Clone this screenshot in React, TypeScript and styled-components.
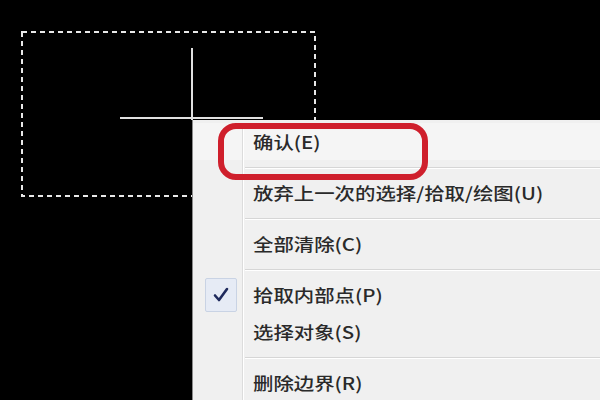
import React from "react";
import styled, { createGlobalStyle } from "styled-components";

const Global = createGlobalStyle`
  html, body {
    margin: 0;
    padding: 0;
    background: #000;
  }
  #root {
    width: 600px;
    height: 400px;
  }
`;

const Screen = styled.div`
  position: relative;
  width: 600px;
  height: 400px;
  background: #000;
  overflow: hidden;
`;

const Drawing = styled.svg`
  position: absolute;
  left: 0;
  top: 0;
  width: 600px;
  height: 400px;
`;

const Menu = styled.div`
  position: absolute;
  left: 192px;
  top: 120px;
  width: 420px;
  height: 290px;
  box-sizing: border-box;
  padding-top: 3px;
  background: #f0f0f0;
  border-left: 1px solid #8a8a8a;
  display: flex;
  flex-direction: column;
  font-family: "Noto Sans CJK SC", "Noto Sans", sans-serif;
  font-size: 17px;
  font-weight: 500;
  color: #2a2a2a;
`;

const Row = styled.div<{ $active?: boolean }>`
  display: flex;
  align-items: stretch;
  height: 37px;
  flex: none;
  background: ${(p) => (p.$active ? "#f5f5f5" : "transparent")};
`;

const Gutter = styled.div`
  width: 49px;
  flex: none;
  border-right: 1px solid #dcdcdc;
  box-shadow: 1px 0 0 #ffffff;
  display: flex;
  align-items: center;
  justify-content: center;
`;

const Label = styled.div`
  display: flex;
  align-items: center;
  padding-left: 10px;
  white-space: nowrap;
`;

const Text = styled.span`
  display: inline-block;
  transform: scaleX(1.2);
  transform-origin: left center;
  line-height: 1;
`;

const SepRow = styled.div`
  display: flex;
  height: 14px;
  flex: none;
`;

const SepLine = styled.div`
  flex: 1;
  margin-left: 2px;
  align-self: center;
  height: 1px;
  background: #d6d6d6;
  box-shadow: 0 1px 0 #ffffff;
`;

const CheckBox = styled.div`
  width: 32px;
  height: 34px;
  box-sizing: border-box;
  margin-left: 6px;
  border: 1px solid #c9d3e4;
  background: #e6ebf5;
  border-radius: 2px;
  display: flex;
  align-items: center;
  justify-content: center;
`;

const Annotation = styled.div`
  position: absolute;
  left: 218px;
  top: 123px;
  width: 210px;
  height: 57px;
  box-sizing: border-box;
  border: 6px solid #cf1f2c;
  border-radius: 18px;
`;

type Entry =
  | { kind: "item"; text: string; checked?: boolean; active?: boolean }
  | { kind: "sep" };

const entries: Entry[] = [
  { kind: "item", text: "确认(E)", active: true },
  { kind: "sep" },
  { kind: "item", text: "放弃上一次的选择/拾取/绘图(U)" },
  { kind: "sep" },
  { kind: "item", text: "全部清除(C)" },
  { kind: "sep" },
  { kind: "item", text: "拾取内部点(P)", checked: true },
  { kind: "item", text: "选择对象(S)" },
  { kind: "sep" },
  { kind: "item", text: "删除边界(R)" },
];

const Check = () => (
  <svg width="18" height="18" viewBox="0 0 18 18">
    <path
      d="M3 9.5 L7 14 L15 3"
      fill="none"
      stroke="#1f2a5c"
      strokeWidth="2.6"
      strokeLinecap="round"
      strokeLinejoin="round"
    />
  </svg>
);

export default function App() {
  return (
    <>
      <Global />
      <Screen>
        <Drawing viewBox="0 0 600 400">
          <rect
            x="22"
            y="32"
            width="293"
            height="164"
            fill="none"
            stroke="#e8e8e8"
            strokeWidth="2"
            strokeDasharray="5 4"
          />
          <line x1="192" y1="48" x2="192" y2="120" stroke="#e0e0e0" strokeWidth="2" />
          <line x1="120" y1="118" x2="263" y2="118" stroke="#e0e0e0" strokeWidth="2" />
        </Drawing>
        <Menu>
          {entries.map((e, i) =>
            e.kind === "sep" ? (
              <SepRow key={i}>
                <Gutter />
                <SepLine />
              </SepRow>
            ) : (
              <Row key={i} $active={e.active}>
                <Gutter>
                  {e.checked && (
                    <CheckBox>
                      <Check />
                    </CheckBox>
                  )}
                </Gutter>
                <Label>
                  <Text>{e.text}</Text>
                </Label>
              </Row>
            )
          )}
        </Menu>
        <Annotation />
      </Screen>
    </>
  );
}
